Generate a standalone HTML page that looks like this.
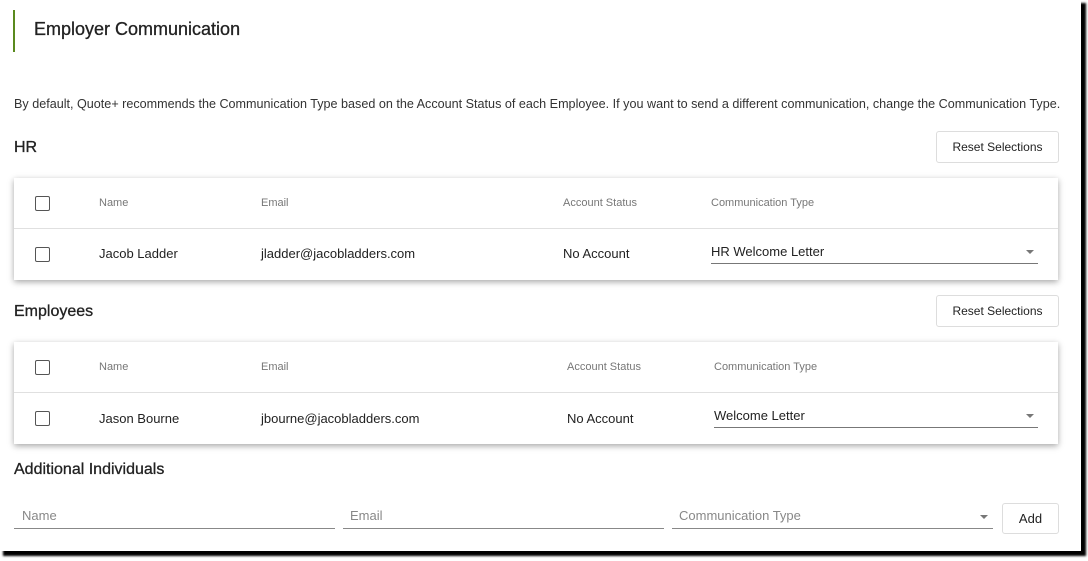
<!DOCTYPE html>
<html><head><style>
*{box-sizing:border-box;margin:0;padding:0}
body{width:1088px;height:561px;background:#fff;font-family:"Liberation Sans",sans-serif;color:#222;position:relative;overflow:hidden}
.a{position:absolute;white-space:nowrap}
.frame{position:absolute;left:0;top:0;width:1081px;height:551px;background:#fff;box-shadow:4px 4px 2px 1px #000}
.card{position:absolute;left:14px;width:1044px;height:102px;background:#fff;box-shadow:0 2px 6px rgba(0,0,0,.35)}
.card .sep{position:absolute;left:0;right:0;top:50px;height:1px;background:#e0e0e0}
.cb{position:absolute;width:15px;height:15px;border:1.5px solid #555;border-radius:2px}
.hd{font-size:11px;color:#777}
.td{font-size:13px;color:#222}
.btn{position:absolute;border:1px solid #ddd;border-radius:3px;background:#fff;font-size:12px;color:#222;text-align:center}
.sel{position:absolute;border-bottom:1px solid #777}
.caret{position:absolute;width:0;height:0;border-left:4px solid transparent;border-right:4px solid transparent;border-top:4px solid #777}
.inp{position:absolute;border-bottom:1px solid #888;font-size:13px;color:#888}
</style></head><body>
<div class="frame"></div>
<div class="a" style="left:13px;top:10px;width:2px;height:42px;background:#5a8a1e"></div>
<div class="a" style="left:34px;top:19px;font-size:18px;color:#222;-webkit-text-stroke:0.3px #222">Employer Communication</div>
<div class="a" style="left:14px;top:97px;font-size:12.6px;color:#333">By default, Quote+ recommends the Communication Type based on the Account Status of each Employee. If you want to send a different communication, change the Communication Type.</div>
<div class="a" style="left:14px;top:139px;font-size:16px;-webkit-text-stroke:0.3px #222">HR</div>
<div class="btn" style="left:936px;top:131px;width:123px;height:32px;line-height:30px">Reset Selections</div>
<div class="card" style="top:178px">
 <div class="cb" style="left:21px;top:18px"></div>
 <div class="a hd" style="left:85px;top:19px">Name</div>
 <div class="a hd" style="left:247px;top:19px">Email</div>
 <div class="a hd" style="left:549px;top:19px">Account Status</div>
 <div class="a hd" style="left:697px;top:19px">Communication Type</div>
 <div class="sep"></div>
 <div class="cb" style="left:21px;top:69px"></div>
 <div class="a td" style="left:85px;top:68px">Jacob Ladder</div>
 <div class="a td" style="left:247px;top:68px">jladder@jacobladders.com</div>
 <div class="a td" style="left:549px;top:68px">No Account</div>
 <div class="sel" style="left:697px;top:64px;width:327px;height:22px"><span class="a td" style="left:0;top:2px">HR Welcome Letter</span><div class="caret" style="right:4px;top:8px"></div></div>
</div>
<div class="a" style="left:14px;top:303px;font-size:16px;-webkit-text-stroke:0.3px #222">Employees</div>
<div class="btn" style="left:936px;top:295px;width:123px;height:32px;line-height:30px">Reset Selections</div>
<div class="card" style="top:342px">
 <div class="cb" style="left:21px;top:18px"></div>
 <div class="a hd" style="left:85px;top:19px">Name</div>
 <div class="a hd" style="left:247px;top:19px">Email</div>
 <div class="a hd" style="left:553px;top:19px">Account Status</div>
 <div class="a hd" style="left:700px;top:19px">Communication Type</div>
 <div class="sep"></div>
 <div class="cb" style="left:21px;top:69px"></div>
 <div class="a td" style="left:85px;top:69px">Jason Bourne</div>
 <div class="a td" style="left:247px;top:69px">jbourne@jacobladders.com</div>
 <div class="a td" style="left:553px;top:69px">No Account</div>
 <div class="sel" style="left:700px;top:64px;width:324px;height:22px"><span class="a td" style="left:0;top:2px">Welcome Letter</span><div class="caret" style="right:4px;top:8px"></div></div>
</div>
<div class="a" style="left:14px;top:461px;font-size:16px;-webkit-text-stroke:0.3px #222">Additional Individuals</div>
<div class="inp" style="left:14px;top:506px;width:321px;height:23px;padding-left:8px;padding-top:2px">Name</div>
<div class="inp" style="left:343px;top:506px;width:321px;height:23px;padding-left:7px;padding-top:2px">Email</div>
<div class="inp" style="left:672px;top:506px;width:321px;height:23px;padding-left:7px;padding-top:2px">Communication Type<div class="caret" style="right:5px;top:9px"></div></div>
<div class="btn" style="left:1002px;top:503px;width:57px;height:31px;line-height:30px;font-size:13px">Add</div>
</body></html>
